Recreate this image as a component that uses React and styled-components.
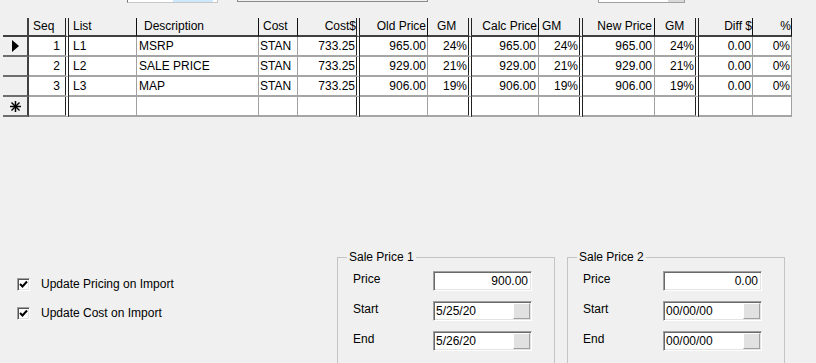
import styled, { createGlobalStyle } from "styled-components";

const GlobalStyle = createGlobalStyle`
  html, body {
    margin: 0;
    padding: 0;
    background: #f0f0f0;
  }
  body {
    font-family: "Liberation Sans", Arial, sans-serif;
    font-size: 12px;
    color: #000;
  }
`;

// colunas da grade: largura inclui a borda da direita
const columns = [
  { key: "seq", head: "Seq", width: 40, hAlign: "left", hPad: "0 0 0 4px", align: "right", pad: "0 5px 0 0", group: true },
  { key: "list", head: "List", width: 68, hAlign: "left", hPad: "0 0 0 4px", align: "left", pad: "0 0 0 4px" },
  { key: "desc", head: "Description", width: 122, hAlign: "left", hPad: "0 0 0 7px", align: "left", pad: "0 0 0 2px" },
  { key: "cost", head: "Cost", width: 39, hAlign: "left", hPad: "0 0 0 4px", align: "left", pad: "0 0 0 1px" },
  { key: "costd", head: "Cost$", width: 62, hAlign: "right", hPad: "0", align: "right", pad: "0 1px 0 0", group: true },
  { key: "old", head: "Old Price", width: 68, hAlign: "right", hPad: "0 1px 0 0", align: "right", pad: "0 1px 0 0" },
  { key: "gm1", head: "GM", width: 44, hAlign: "left", hPad: "0 0 0 9px", align: "right", pad: "0 1px 0 0", group: true },
  { key: "calc", head: "Calc Price", width: 67, hAlign: "right", hPad: "0 1px 0 0", align: "right", pad: "0 2px 0 0" },
  { key: "gm2", head: "GM", width: 44, hAlign: "left", hPad: "0 0 0 3px", align: "right", pad: "0 1px 0 0", group: true },
  { key: "newp", head: "New Price", width: 72, hAlign: "right", hPad: "0 2px 0 0", align: "right", pad: "0 2px 0 0" },
  { key: "gm3", head: "GM", width: 44, hAlign: "left", hPad: "0 0 0 10px", align: "right", pad: "0 1px 0 0", group: true },
  { key: "diff", head: "Diff $", width: 54, hAlign: "right", hPad: "0", align: "right", pad: "0 1px 0 0" },
  { key: "pct", head: "%", width: 39, hAlign: "right", hPad: "0", align: "right", pad: "0 1px 0 0" },
];

const rows = [
  { seq: "1", list: "L1", desc: "MSRP", cost: "STAN", costd: "733.25", old: "965.00", gm1: "24%", calc: "965.00", gm2: "24%", newp: "965.00", gm3: "24%", diff: "0.00", pct: "0%" },
  { seq: "2", list: "L2", desc: "SALE PRICE", cost: "STAN", costd: "733.25", old: "929.00", gm1: "21%", calc: "929.00", gm2: "21%", newp: "929.00", gm3: "21%", diff: "0.00", pct: "0%" },
  { seq: "3", list: "L3", desc: "MAP", cost: "STAN", costd: "733.25", old: "906.00", gm1: "19%", calc: "906.00", gm2: "19%", newp: "906.00", gm3: "19%", diff: "0.00", pct: "0%" },
];

function App() {
  return (
    <>
      <GlobalStyle />
      <Page>
        <TopBar>
          <ComboStub />
          <LineStub />
          <DropStub />
        </TopBar>

        <Grid>
          <Row>
            <Indicator $head />
            {columns.map((c) => (
              <HeadCell key={c.key} $width={c.width} $align={c.hAlign} $pad={c.hPad} $group={c.group}>
                {c.head}
              </HeadCell>
            ))}
          </Row>
          {rows.map((r, i) => (
            <Row key={r.seq}>
              <Indicator>
                {i === 0 && (
                  <svg width="7" height="12" viewBox="0 0 7 12">
                    <polygon points="0,0 7,6 0,12" fill="#000" />
                  </svg>
                )}
              </Indicator>
              {columns.map((c) => (
                <Cell key={c.key} $width={c.width} $align={c.align} $pad={c.pad} $group={c.group}>
                  {r[c.key]}
                </Cell>
              ))}
            </Row>
          ))}
          <Row>
            <Indicator>
              <svg width="11" height="11" viewBox="0 0 11 11">
                <g stroke="#000" strokeWidth="1.5">
                  <line x1="5.5" y1="0" x2="5.5" y2="11" />
                  <line x1="0" y1="5.5" x2="11" y2="5.5" />
                  <line x1="1.5" y1="1.5" x2="9.5" y2="9.5" />
                  <line x1="9.5" y1="1.5" x2="1.5" y2="9.5" />
                </g>
              </svg>
            </Indicator>
            {columns.map((c) => (
              <Cell key={c.key} $width={c.width} $group={c.group} />
            ))}
          </Row>
        </Grid>

        <Bottom>
          <Checks>
            <CheckRow>
              <CheckBox>
                <CheckMark />
              </CheckBox>
              Update Pricing on Import
            </CheckRow>
            <CheckRow>
              <CheckBox>
                <CheckMark />
              </CheckBox>
              Update Cost on Import
            </CheckRow>
          </Checks>

          <SaleGroup title="Sale Price 1" price="900.00" start="5/25/20" end="5/26/20" />
          <SaleGroup title="Sale Price 2" price="0.00" start="00/00/00" end="00/00/00" />
        </Bottom>
      </Page>
    </>
  );
}

function CheckMark() {
  return (
    <svg width="9" height="9" viewBox="0 0 9 9">
      <polyline points="1,4 3.5,6.5 8,1.5" fill="none" stroke="#000" strokeWidth="2" />
    </svg>
  );
}

function SaleGroup({ title, price, start, end }) {
  return (
    <Group>
      <Legend>{title}</Legend>
      <FieldRow>
        <FieldLabel>Price</FieldLabel>
        <TextBox $right>{price}</TextBox>
      </FieldRow>
      <FieldRow>
        <FieldLabel>Start</FieldLabel>
        <TextBox>
          {start}
          <DateButton />
        </TextBox>
      </FieldRow>
      <FieldRow>
        <FieldLabel>End</FieldLabel>
        <TextBox>
          {end}
          <DateButton />
        </TextBox>
      </FieldRow>
    </Group>
  );
}

const Page = styled.div`
  width: 816px;
  height: 363px;
  overflow: hidden;
  background: #f0f0f0;
`;

const TopBar = styled.div`
  display: flex;
  height: 3px;
`;

const ComboStub = styled.div`
  margin-left: 127px;
  width: 91px;
  height: 3px;
  box-sizing: border-box;
  border-left: 1px solid #7a7a7a;
  border-right: 1px solid #c8c8c8;
  border-bottom: 1px solid #c8c8c8;
  background: linear-gradient(to right, #fff 0 45px, #cce8ff 45px 85px, #fff 85px);
`;

const LineStub = styled.div`
  margin-left: 19px;
  width: 191px;
  height: 2px;
  box-sizing: border-box;
  border: 1px solid #8a8a8a;
  border-top: 0;
`;

const DropStub = styled.div`
  margin-left: 170px;
  width: 87px;
  height: 3px;
  box-sizing: border-box;
  border-left: 1px solid #a0a0a0;
  border-bottom: 1px solid #a0a0a0;
  border-right: 1px solid #a0a0a0;
  background: linear-gradient(to right, #fff 0 69px, #d9d9d9 69px);
`;

const Grid = styled.div`
  margin: 15px 0 0 3px;
  width: 789px;
`;

const Row = styled.div`
  display: flex;
`;

const Indicator = styled.div`
  width: 26px;
  height: ${(p) => (p.$head ? "19px" : "20px")};
  box-sizing: border-box;
  display: flex;
  align-items: center;
  justify-content: center;
  background: #f0f0f0;
  border-right: 2px solid #404040;
  border-bottom: 2px solid ${(p) => (p.$head ? "#404040" : "#6d6d6d")};
`;

const HeadCell = styled.div`
  width: ${(p) => p.$width}px;
  height: 19px;
  box-sizing: border-box;
  padding: ${(p) => p.$pad};
  text-align: ${(p) => p.$align};
  line-height: 17px;
  white-space: nowrap;
  overflow: hidden;
  background: #f0f0f0;
  border-bottom: 2px solid #404040;
  border-right: ${(p) => (p.$group ? "4px double #222" : "1px solid #111")};
`;

const Cell = styled.div`
  width: ${(p) => p.$width}px;
  height: 20px;
  box-sizing: border-box;
  padding: ${(p) => p.$pad || 0};
  text-align: ${(p) => p.$align || "left"};
  line-height: 19px;
  white-space: nowrap;
  overflow: hidden;
  background: #fff;
  border-bottom: 2px solid #a5a5a5;
  border-right: ${(p) => (p.$group ? "4px double #222" : "1px solid #a0a0a0")};
`;

const Bottom = styled.div`
  display: flex;
  align-items: flex-start;
  margin-top: 133px;
  padding-left: 17px;
`;

const Checks = styled.div`
  width: 320px;
  padding-top: 28px;
  display: flex;
  flex-direction: column;
  gap: 16px;
`;

const CheckRow = styled.div`
  display: flex;
  align-items: center;
  gap: 11px;
  height: 13px;
  line-height: 13px;
`;

const CheckBox = styled.div`
  width: 13px;
  height: 13px;
  box-sizing: border-box;
  background: #fff;
  border: 1px solid;
  border-color: #a0a0a0 #fff #fff #a0a0a0;
  box-shadow: inset 1px 1px 0 #555, inset -1px -1px 0 #e3e3e3;
  display: flex;
  align-items: center;
  justify-content: center;
`;

const Group = styled.fieldset`
  width: 218px;
  height: 125px;
  box-sizing: border-box;
  margin: 0 12px 0 0;
  padding: 7px 0 0 0;
  border: 1px solid #c4c4c4;
  display: flex;
  flex-direction: column;
  gap: 10px;
`;

const Legend = styled.legend`
  margin-left: 9px;
  padding: 0 2px;
  line-height: 14px;
  font-size: 12px;
`;

const FieldRow = styled.div`
  display: flex;
  align-items: flex-start;
  height: 20px;
  padding-left: 15px;
`;

const FieldLabel = styled.div`
  width: 80px;
  line-height: 16px;
`;

const TextBox = styled.div`
  position: relative;
  width: 99px;
  height: 20px;
  box-sizing: border-box;
  background: #fff;
  border: 1px solid;
  border-color: #a0a0a0 #fff #fff #a0a0a0;
  box-shadow: inset 1px 1px 0 #696969, inset -1px -1px 0 #e3e3e3;
  padding: ${(p) => (p.$right ? "0 3px 0 0" : "0 0 0 2px")};
  text-align: ${(p) => (p.$right ? "right" : "left")};
  line-height: 18px;
`;

const DateButton = styled.div`
  position: absolute;
  right: 1px;
  top: 1px;
  width: 17px;
  height: 16px;
  box-sizing: border-box;
  background: #e1e1e1;
  border: 1px solid;
  border-color: #fff #a0a0a0 #a0a0a0 #fff;
`;

export default App;
